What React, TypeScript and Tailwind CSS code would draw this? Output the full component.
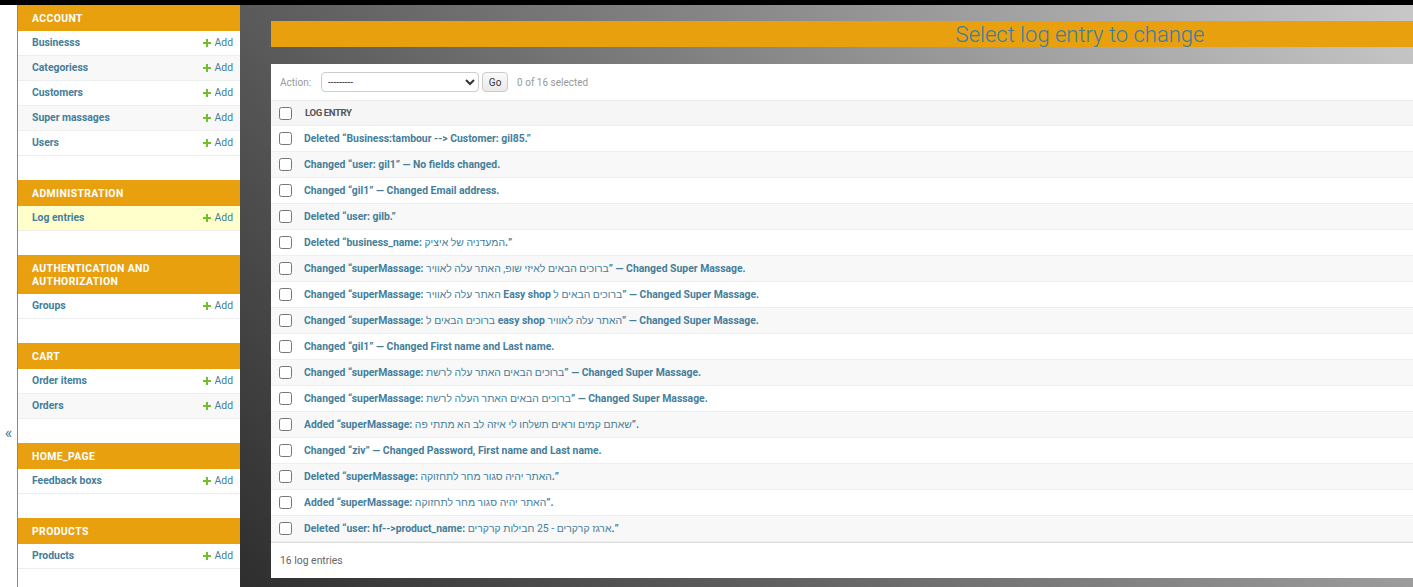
import React from "react";

type Module = { title: string; items: string[]; current?: string };

const modules: Module[] = [
  { title: "Account", items: ["Businesss", "Categoriess", "Customers", "Super massages", "Users"] },
  { title: "Administration", items: ["Log entries"], current: "Log entries" },
  { title: "Authentication and Authorization", items: ["Groups"] },
  { title: "Cart", items: ["Order items", "Orders"] },
  { title: "Home_page", items: ["Feedback boxs"] },
  { title: "Products", items: ["Products"] },
];

const entries = [
  "Deleted “Business:tambour --> Customer: gil85.”",
  "Changed “user: gil1” — No fields changed.",
  "Changed “gil1” — Changed Email address.",
  "Deleted “user: gilb.”",
  "Deleted “business_name: המעדניה של איציק.”",
  "Changed “superMassage: ברוכים הבאים לאיזי שופ, האתר עלה לאוויר” — Changed Super Massage.",
  "Changed “superMassage: האתר עלה לאוויר Easy shop ברוכים הבאים ל” — Changed Super Massage.",
  "Changed “superMassage: ברוכים הבאים ל easy shop האתר עלה לאוויר” — Changed Super Massage.",
  "Changed “gil1” — Changed First name and Last name.",
  "Changed “superMassage: ברוכים הבאים האתר עלה לרשת” — Changed Super Massage.",
  "Changed “superMassage: ברוכים הבאים האתר העלה לרשת” — Changed Super Massage.",
  "Added “superMassage: שאתם קמים וראים תשלחו לי איזה לב הא מתתי פה”.",
  "Changed “ziv” — Changed Password, First name and Last name.",
  "Deleted “superMassage: האתר יהיה סגור מחר לתחזוקה.”",
  "Added “superMassage: האתר יהיה סגור מחר לתחזוקה”.",
  "Deleted “user: hf-->product_name: ארגז קרקרים - 25 חבילות קרקרים.”",
];

// hebrew runs come out in a lighter fallback face in the original
const HEBREW = /([\u0590-\u05FF]+(?:[\s,\-\d]+[\u0590-\u05FF]+)*)/;

function EntryText({ text }: { text: string }) {
  const parts = text.split(HEBREW);
  return (
    <>
      {parts.map((p, i) =>
        i % 2 === 1 ? (
          <span key={i} className="font-normal">
            {p}
          </span>
        ) : (
          p
        )
      )}
    </>
  );
}

function PlusIcon() {
  return (
    <svg width="8" height="8" viewBox="0 0 8 8" className="shrink-0">
      <path d="M3 0h2v3h3v2H5v3H3V5H0V3h3z" fill="#70bf2b" />
    </svg>
  );
}

function Sidebar() {
  return (
    <aside className="w-[222px] shrink-0 bg-white">
      {modules.map((m) => (
        <div key={m.title} className="mb-[24px]">
          <div className="bg-[#e8a00f] px-[14px] pt-[7px] pb-[6px] text-[10.4px] leading-[13px] font-bold uppercase tracking-[0.4px] text-white">
            {m.title}
          </div>
          {m.items.map((item, i) => (
            <div
              key={item}
              className={`flex h-[25px] items-center border-b border-[#eee] pl-[14px] pr-[7px] ${
                m.current === item ? "bg-[#ffffcc]" : i % 2 === 1 ? "bg-[#f8f8f8]" : "bg-white"
              }`}
            >
              <span className="flex-1 text-[10.4px] font-bold text-[#447e9b]">{item}</span>
              <span className="flex items-center gap-[4px] text-[10.4px] text-[#447e9b]">
                <PlusIcon />
                Add
              </span>
            </div>
          ))}
        </div>
      ))}
    </aside>
  );
}

function Checkbox() {
  return <input type="checkbox" className="m-0 h-[13px] w-[13px] shrink-0" readOnly />;
}

export default function App() {
  return (
    <div className="flex h-[587px] flex-col overflow-hidden font-[Roboto,'Liberation_Sans',sans-serif]">
      <div className="h-[5px] shrink-0 bg-black" />
      <div className="flex min-h-0 flex-1">
        <div className="flex w-[18px] shrink-0 justify-center border-r border-[#888] bg-white pt-[420px]">
          <span className="text-[16px] leading-none text-[#447e9b]">«</span>
        </div>
        <Sidebar />
        <main className="min-w-0 flex-1 overflow-hidden bg-[linear-gradient(51deg,#2e2e2e,#c8c8c8)] pl-[31px] pt-[16px]">
          <div className="w-[1618px]">
            <h1 className="flex h-[26px] items-center justify-center bg-[#e8a00f] pt-[1px] text-[22px] font-light text-[#3a7da6]">
              Select log entry to change
            </h1>
            <div className="mt-[17px] h-[514px] bg-white">
              <div className="flex h-[36px] items-center pl-[9px] text-[10px] text-[#999]">
                <span>Action:</span>
                <select className="ml-[10px] h-[20px] w-[158px] rounded-[4px] border border-[#ccc] bg-white pl-[2px] text-[10px] text-[#333]">
                  <option>---------</option>
                </select>
                <button className="ml-[3px] h-[20px] w-[26px] rounded-[4px] border border-[#ccc] bg-[linear-gradient(#fafafa,#eaeaea)] text-[10px] text-[#333]">
                  Go
                </button>
                <span className="ml-[9px]">0 of 16 selected</span>
              </div>
              <div className="flex h-[26px] items-center border-y border-[#eee] bg-[#f6f6f6] pl-[8px]">
                <Checkbox />
                <span className="ml-[13px] text-[9.6px] font-bold uppercase tracking-[-0.4px] text-[#555]">
                  Log entry
                </span>
              </div>
              {entries.map((e, i) => (
                <div
                  key={i}
                  className={`flex h-[26px] items-center border-b border-[#eee] pl-[8px] ${
                    i % 2 === 1 ? "bg-[#f8f8f8]" : "bg-white"
                  }`}
                >
                  <Checkbox />
                  <span className="ml-[12px] pt-[1px] text-[10.4px] font-bold text-[#447e9b]">
                    <EntryText text={e} />
                  </span>
                </div>
              ))}
              <div className="flex h-[35px] items-center border-t border-[#ddd] pl-[9px] pt-[1px] text-[10.4px] text-[#666]">
                16 log entries
              </div>
            </div>
          </div>
        </main>
      </div>
    </div>
  );
}
